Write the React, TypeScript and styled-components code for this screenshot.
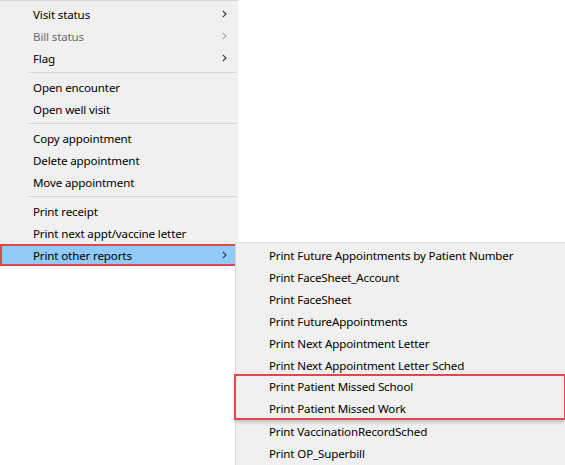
import React from 'react';
import styled, { createGlobalStyle } from 'styled-components';

type Entry = { label?: string; sep?: boolean; disabled?: boolean; sub?: boolean; active?: boolean };

const mainItems: Entry[] = [
  { label: 'Visit status', sub: true },
  { label: 'Bill status', sub: true, disabled: true },
  { label: 'Flag', sub: true },
  { sep: true },
  { label: 'Open encounter' },
  { label: 'Open well visit' },
  { sep: true },
  { label: 'Copy appointment' },
  { label: 'Delete appointment' },
  { label: 'Move appointment' },
  { sep: true },
  { label: 'Print receipt' },
  { label: 'Print next appt/vaccine letter' },
  { label: 'Print other reports', sub: true, active: true },
];

const reportsBefore = [
  'Print Future Appointments by Patient Number',
  'Print FaceSheet_Account',
  'Print FaceSheet',
  'Print FutureAppointments',
  'Print Next Appointment Letter',
  'Print Next Appointment Letter Sched',
];
const reportsMarked = ['Print Patient Missed School', 'Print Patient Missed Work'];
const reportsAfter = ['Print VaccinationRecordSched', 'Print OP_Superbill'];

const GlobalStyle = createGlobalStyle`
  html, body {
    margin: 0;
    padding: 0;
    background: #ffffff;
    width: 565px;
    height: 465px;
    overflow: hidden;
  }
  body {
    font-family: 'Noto Sans', 'Open Sans', sans-serif;
    font-size: 11.6px;
    letter-spacing: -0.15px;
    color: #000;
  }
`;

const Page = styled.div`
  position: relative;
  width: 565px;
  height: 465px;
  overflow: hidden;
`;

const Menu = styled.div`
  width: 238px;
  background: #f0f0f0;
  border-top: 1px solid #d9d9d9;
  padding: 2px 0 1px;
  display: flex;
  flex-direction: column;
`;

// flyout that lies over the page, next to the active row
const SubMenu = styled.div`
  position: absolute;
  left: 235px;
  top: 242px;
  width: 330px;
  height: 240px;
  background: #f0f0f0;
  border-left: 1px solid #d4d4d4;
  border-top: 1px solid #e2e2e2;
  padding-top: 1px;
  display: flex;
  flex-direction: column;
`;

const Row = styled.div<{ $disabled?: boolean; $active?: boolean; $inset?: number }>`
  height: 22px;
  display: flex;
  align-items: center;
  padding-left: ${(p) => p.$inset ?? 33}px;
  padding-right: 11px;
  white-space: nowrap;
  color: ${(p) => (p.$disabled ? '#6d6d6d' : '#000')};
  background: ${(p) => (p.$active ? '#91c9f7' : 'transparent')};
  box-shadow: ${(p) => (p.$active ? 'inset 0 0 0 2px #e2474d' : 'none')};
`;

const Label = styled.span`
  flex: 1;
  line-height: 22px;
  padding-top: 1px;
`;

const Separator = styled.div`
  height: 1px;
  margin: 3px 1px 3px 29px;
  background: #d7d7d7;
`;

const Marked = styled.div`
  display: flex;
  flex-direction: column;
  outline: 2px solid #e2474d;
  outline-offset: -1px;
  margin: -1px 0 1px -1px;
  width: 330px;
  box-shadow: 0 3px 4px rgba(0, 0, 0, 0.22);
`;

const Chevron = ({ dim }: { dim?: boolean }) => (
  <svg width="5" height="8" viewBox="0 0 5 8">
    <path d="M0.8 0.8 L4 4 L0.8 7.2" fill="none" stroke={dim ? '#a6a6a6' : '#333'} strokeWidth="1.1" />
  </svg>
);

export default function App() {
  return (
    <Page>
      <GlobalStyle />
      <Menu>
        {mainItems.map((item, index) =>
          item.sep ? (
            <Separator key={index} />
          ) : (
            <Row key={index} $disabled={item.disabled} $active={item.active}>
              <Label>{item.label}</Label>
              {item.sub && <Chevron dim={item.disabled} />}
            </Row>
          )
        )}
      </Menu>
      <SubMenu>
        {reportsBefore.map((r) => (
          <Row key={r}>
            <Label>{r}</Label>
          </Row>
        ))}
        <Marked>
          {reportsMarked.map((r) => (
            <Row key={r} $inset={34}>
              <Label>{r}</Label>
            </Row>
          ))}
        </Marked>
        {reportsAfter.map((r) => (
          <Row key={r}>
            <Label>{r}</Label>
          </Row>
        ))}
      </SubMenu>
    </Page>
  );
}
